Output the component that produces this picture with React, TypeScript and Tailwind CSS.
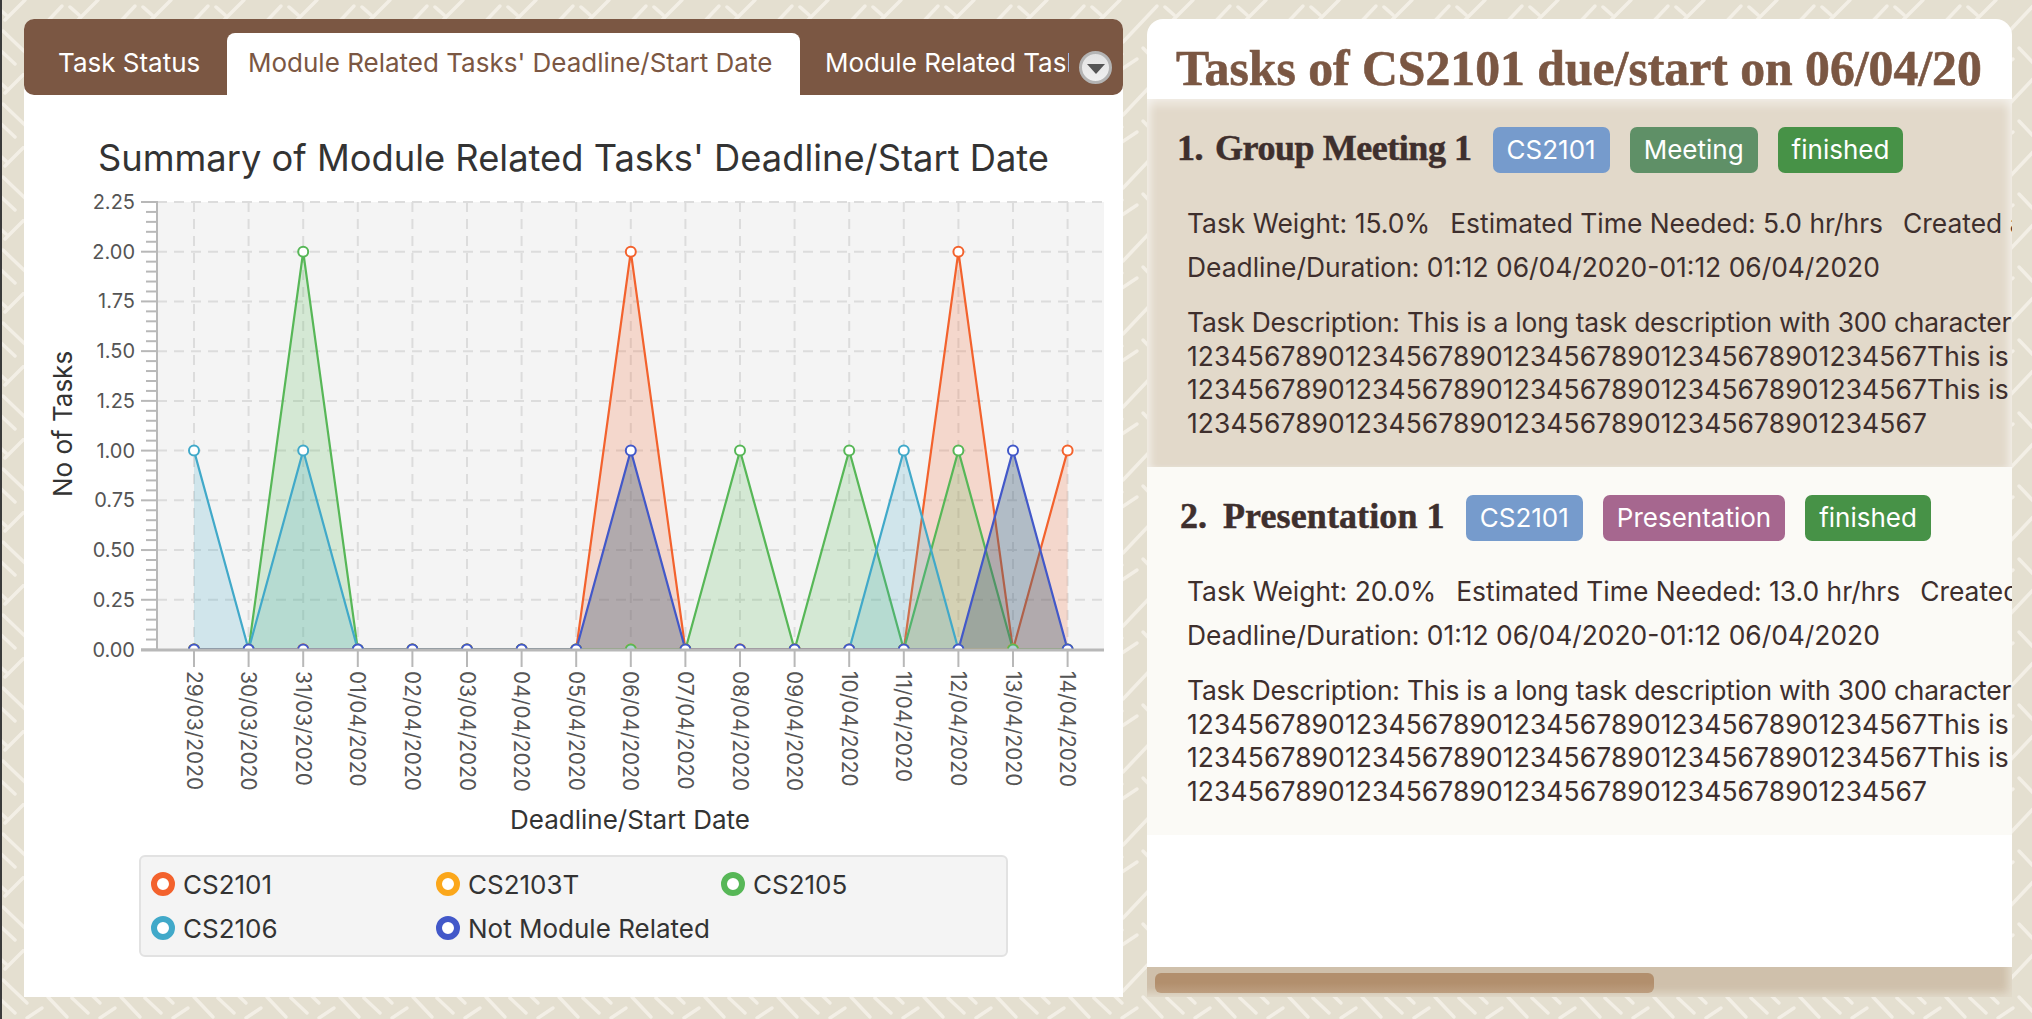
import React from "react";

const days = [
  "29/03/2020", "30/03/2020", "31/03/2020", "01/04/2020", "02/04/2020", "03/04/2020",
  "04/04/2020", "05/04/2020", "06/04/2020", "07/04/2020", "08/04/2020", "09/04/2020",
  "10/04/2020", "11/04/2020", "12/04/2020", "13/04/2020", "14/04/2020",
];

const X0 = 194;
const XSTEP = 54.6;
const Y0 = 649.5;
const YSTEP = 198.9; // px per task

const px = (i: number) => X0 + i * XSTEP;
const py = (v: number) => Y0 - v * YSTEP;

type Run = { start: number; values: number[] };

const zeros = (n: number) => Array.from({ length: n }, () => 0);

const series: { color: string; fill: string; alpha: number; runs: Run[] }[] = [
  { color: "#f3622d", fill: "#f3622d", alpha: 0.2, runs: [{ start: 0, values: [0, 0, 0, 0, 0, 0, 0, 0, 2, 0, 0, 0, 0, 0, 2, 0, 1] }] },
  { color: "#fba71b", fill: "#fba71b", alpha: 0.2, runs: [{ start: 0, values: zeros(17) }] },
  { color: "#57b757", fill: "#57b757", alpha: 0.2, runs: [{ start: 0, values: [0, 0, 2, 0, 0, 0, 0, 0, 0, 0, 1, 0, 1, 0, 1, 0, 0] }] },
  {
    color: "#41a9c9",
    fill: "#41a9c9",
    alpha: 0.2,
    runs: [
      { start: 0, values: [1, 0, 1, 0] },
      { start: 12, values: [0, 1, 0] },
    ],
  },
  { color: "#4258c9", fill: "#44607c", alpha: 0.38, runs: [{ start: 0, values: [0, 0, 0, 0, 0, 0, 0, 0, 1, 0, 0, 0, 0, 0, 0, 1, 0] }] },
];

const legend = [
  { name: "CS2101", ring: "border-[#f3622d]" },
  { name: "CS2103T", ring: "border-[#fba71b]" },
  { name: "CS2105", ring: "border-[#57b757]" },
  { name: "CS2106", ring: "border-[#41a9c9]" },
  { name: "Not Module Related", ring: "border-[#4258c9]" },
];

const digits = "12345678901234567890123456789012345678901234567";

const tasks = [
  {
    no: "1.",
    noBox: "w-[38px]",
    nameClass: "tracking-[-0.45px]",
    name: "Group Meeting 1",
    rowBg: "bg-[#e2d9ca] shadow-[inset_0_6px_10px_rgba(255,255,255,0.45),inset_8px_0_8px_-4px_rgba(255,255,255,0.4),inset_-8px_0_8px_-4px_rgba(255,255,255,0.4)]",
    weight: "15.0",
    hours: "5.0",
    tags: [
      { label: "CS2101", bg: "bg-[#769bcc]" },
      { label: "Meeting", bg: "bg-[#5f9067]" },
      { label: "finished", bg: "bg-[#479247]" },
    ],
  },
  {
    no: "2.",
    noBox: "w-[46px] pl-[3px]",
    nameClass: "tracking-[0.1px]",
    name: "Presentation 1",
    rowBg: "bg-[#fbfaf6]",
    weight: "20.0",
    hours: "13.0",
    tags: [
      { label: "CS2101", bg: "bg-[#769bcc]" },
      { label: "Presentation", bg: "bg-[#a6678f]" },
      { label: "finished", bg: "bg-[#479247]" },
    ],
  },
];

function Backdrop() {
  return (
    <svg className="absolute inset-0 w-full h-full" aria-hidden="true">
      <defs>
        <pattern id="weave" width="73" height="73" patternUnits="userSpaceOnUse">
          <rect width="73" height="73" fill="#e4dfd0" />
          <g stroke="#f3efe6" strokeWidth="3.5" strokeLinecap="round">
            <line x1="5" y1="20" x2="25" y2="0" />
            <line x1="28" y1="42" x2="62" y2="6" />
            <line x1="-3" y1="7" x2="6" y2="15" />
            <line x1="70" y1="7" x2="79" y2="15" />
            <line x1="3" y1="31" x2="27" y2="54" />
            <line x1="48" y1="48" x2="67" y2="68" />
            <line x1="-1" y1="49" x2="15" y2="64" />
            <line x1="72" y1="49" x2="88" y2="64" />
            <line x1="27" y1="69" x2="42" y2="59" />
          </g>
        </pattern>
      </defs>
      <rect width="100%" height="100%" fill="url(#weave)" />
    </svg>
  );
}

function Chart() {
  const yTicks = [0, 0.25, 0.5, 0.75, 1, 1.25, 1.5, 1.75, 2, 2.25];
  const minor: number[] = [];
  for (let i = 0; i < 45; i++) {
    if (i % 5 !== 0) minor.push(i * 0.05);
  }

  return (
    <svg className="block" width="1099" height="660" viewBox="24 190 1099 660" fontFamily="Inter, sans-serif">
      <defs>
        <clipPath id="plot">
          <rect x="157" y="195" width="947" height="454" />
        </clipPath>
      </defs>

      <rect x="157" y="202" width="947" height="447" fill="#f4f4f4" />

      <g stroke="#dcdcdc" strokeWidth="2" strokeDasharray="10 7">
        {yTicks.slice(1).map((t) => (
          <line key={t} x1="157" x2="1104" y1={py(t)} y2={py(t)} />
        ))}
        {days.map((d, i) => (
          <line key={d} x1={px(i)} x2={px(i)} y1="202" y2={Y0} />
        ))}
      </g>

      <g clipPath="url(#plot)">
        {series.map((s) =>
          s.runs.map((r) => {
            const pts = r.values.map((v, i) => `${px(r.start + i)},${py(v)}`).join(" ");
            const first = px(r.start);
            const last = px(r.start + r.values.length - 1);
            return (
              <g key={s.color + r.start}>
                <polygon points={`${first},${Y0} ${pts} ${last},${Y0}`} fill={s.fill} fillOpacity={s.alpha} />
                <polyline points={pts} fill="none" stroke={s.color} strokeWidth="2.2" />
              </g>
            );
          }),
        )}
        {series.map((s) =>
          s.runs.map((r) =>
            r.values.map((v, i) => {
              const idx = r.start + i;
              const shaded = s.color === "#57b757" && v === 0 && (idx === 8 || idx === 15);
              return (
                <circle
                  key={s.color + idx}
                  cx={px(idx)}
                  cy={py(v)}
                  r="5"
                  fill={shaded ? "#b7d0dc" : "#ffffff"}
                  stroke={s.color}
                  strokeWidth="2"
                />
              );
            }),
          ),
        )}
      </g>

      <g stroke="#b8b8b8" strokeWidth="2">
        <line x1="157" x2="157" y1="201" y2="650" />
        <line x1="141" x2="1104" y1={Y0 + 0.5} y2={Y0 + 0.5} strokeWidth="3" />
        {yTicks.map((t) => (
          <line key={t} x1="141" x2="157" y1={py(t)} y2={py(t)} />
        ))}
        {minor.map((t) => (
          <line key={t} x1="146" x2="157" y1={py(t)} y2={py(t)} />
        ))}
        {days.map((d, i) => (
          <line key={d} x1={px(i)} x2={px(i)} y1="650" y2="667" />
        ))}
      </g>

      <g fill="#555555" fontSize="20">
        {yTicks.map((t) => (
          <text key={t} x="135" y={py(t) + 7} textAnchor="end">
            {t.toFixed(2)}
          </text>
        ))}
        {days.map((d, i) => (
          <text key={d} fontSize="21" transform={`translate(${px(i) - 7.5} 671) rotate(90)`}>
            {d}
          </text>
        ))}
      </g>

      <text transform="translate(72 424) rotate(-90)" textAnchor="middle" fontSize="26" fill="#333333">
        No of Tasks
      </text>
      <text x="630" y="829" textAnchor="middle" fontSize="26" fill="#333333">
        Deadline/Start Date
      </text>
    </svg>
  );
}

function LeftPanel() {
  return (
    <div className="w-[1099px] h-full bg-white rounded-t-[10px] flex flex-col">
      <div className="h-[76px] bg-[#7b5743] rounded-[10px] flex items-end text-[26px] leading-[30px] text-white">
        <div className="w-[203px] h-[62px] pl-[34px] pt-[15px] shrink-0">Task Status</div>
        <div className="w-[573px] h-[62px] pl-[21px] pt-[15px] shrink-0 bg-white text-[#7b5743] rounded-t-[8px] whitespace-nowrap">
          Module Related Tasks' Deadline/Start Date
        </div>
        <div className="w-[244px] h-[62px] ml-[25px] pt-[15px] shrink-0 overflow-hidden whitespace-nowrap">
          Module Related Tasks' Deadline/Start Date
        </div>
        <div className="h-[62px] flex items-start pt-[18px] ml-[10px]">
          <div className="w-[33px] h-[33px] rounded-full border-[3px] border-[#b4b4b4] bg-gradient-to-b from-[#e2e2e2] to-[#f0f0f0] flex items-center justify-center shrink-0">
            <div className="w-0 h-0 border-l-[9px] border-r-[9px] border-t-[10px] border-l-transparent border-r-transparent border-t-[#555555] mt-[2px]" />
          </div>
        </div>
      </div>

      <div className="h-[95px] pt-[43px] text-center text-[36.3px] leading-[40px] text-[#333333] whitespace-nowrap">
        Summary of Module Related Tasks' Deadline/Start Date
      </div>

      <Chart />

      <div className="ml-[115px] mt-[5px] w-[869px] h-[102px] bg-[#f4f4f4] border-2 border-[#e2e2e2] rounded-[6px] pl-[10px] pt-[5px] grid grid-cols-[285px_285px_1fr] auto-rows-[44px] text-[26px] text-[#333333]">
        {legend.map((l) => (
          <div key={l.name} className="flex items-center gap-[8px]">
            <span className={`w-[24px] h-[24px] rounded-full bg-white border-[6px] ${l.ring}`} />
            <span>{l.name}</span>
          </div>
        ))}
      </div>
    </div>
  );
}

function TaskRow({ task }: { task: (typeof tasks)[number] }) {
  return (
    <div className={`h-[368px] pl-[30px] text-[#3e2f2d] overflow-hidden ${task.rowBg}`}>
      <div className="h-[46px] mt-[28px] flex items-center">
        <div className={`font-['Liberation_Serif',serif] font-bold text-[36px] leading-[46px] whitespace-nowrap mr-[21px] pb-[4px] [-webkit-text-stroke:0.5px_#3e2f2d] ${task.nameClass}`}>
          <span className={`inline-block ${task.noBox}`}>{task.no}</span>
          {task.name}
        </div>
        <div className="flex gap-[20px]">
          {task.tags.map((t) => (
            <span key={t.label} className={`h-[46px] px-[14px] rounded-[7px] text-white text-[26px] leading-[46px] ${t.bg}`}>
              {t.label}
            </span>
          ))}
        </div>
      </div>

      <div className="pl-[10px] text-[26.4px] whitespace-nowrap">
        <div className="mt-[30px] leading-[40px]">
          <span>Task Weight: {task.weight}%</span>
          <span className="ml-[20px]">Estimated Time Needed: {task.hours} hr/hrs</span>
          <span className="ml-[20px]">Created at: 01:12 06/04/2020</span>
        </div>
        <div className="mt-[4px] leading-[40px]">Deadline/Duration: 01:12 06/04/2020-01:12 06/04/2020</div>
        <div className="mt-[19px] leading-[33.7px]">
          <div className="tracking-[-0.2px]">Task Description: This is a long task description with 300 characters</div>
          <div className="tracking-[0.14px]">{digits}This is a long task description</div>
          <div className="tracking-[0.14px]">{digits}This is a long task description</div>
          <div className="tracking-[0.14px]">{digits}</div>
        </div>
      </div>
    </div>
  );
}

function RightPanel() {
  return (
    <div className="w-[865px] h-full flex flex-col">
      <div className="flex-1 min-h-0 bg-white rounded-t-[16px] overflow-hidden">
        <div className="h-[80px] pl-[29px] pt-[20px] font-['Liberation_Serif',serif] font-bold text-[49.7px] leading-[60px] text-[#7b5743] whitespace-nowrap [-webkit-text-stroke:0.6px_#7b5743]">
          Tasks of CS2101 due/start on 06/04/20
        </div>
        {tasks.map((t) => (
          <TaskRow key={t.no} task={t} />
        ))}
      </div>
      <div className="h-[30px] bg-[#cfc0ab] pl-[8px] pt-[6px] shadow-[inset_-6px_-6px_8px_-2px_rgba(228,223,208,0.9)] shrink-0">
        <div className="w-[499px] h-[20px] rounded-[6px] bg-gradient-to-b from-[#b28f6d] via-[#b28f6d] to-[#bd9e80]" />
      </div>
    </div>
  );
}

export default function App() {
  return (
    <div className="relative w-full h-[1019px] overflow-hidden font-['Inter',sans-serif]">
      <Backdrop />
      <div className="absolute left-0 top-0 bottom-0 w-[2px] bg-[#3a3a3a]" />
      <div className="relative h-full pl-[24px] pt-[19px] pb-[22px] flex gap-[24px]">
        <LeftPanel />
        <RightPanel />
      </div>
    </div>
  );
}
